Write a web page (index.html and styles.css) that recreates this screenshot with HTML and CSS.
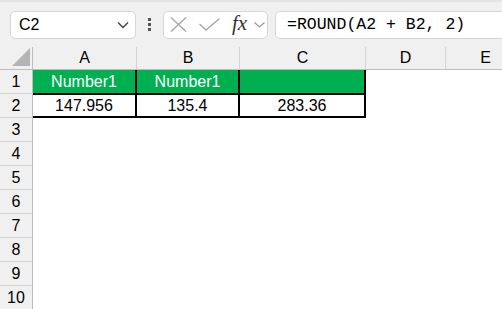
FILE: index.html
```html
<!DOCTYPE html>
<html lang="en">
<head>
	<meta charset="UTF-8">
	<title>ROUND</title>
	<link rel="stylesheet" href="styles.css">
</head>
<body>
	<div class="toolbar">
		<div class="namebox">
			<span>C2</span>
			<svg class="chev" width="12" height="8" viewBox="0 0 12 8"><polyline points="1,1.5 6,6.5 11,1.5" fill="none" stroke="#444" stroke-width="1.4"/></svg>
		</div>
		<div class="dots"><i></i><i></i><i></i></div>
		<div class="fbtns">
			<svg width="17" height="15" viewBox="0 0 17 15"><path d="M1 0.5 L16 14.5 M16 0.5 L1 14.5" stroke="#a8a8a8" stroke-width="1.4" fill="none"/></svg>
			<svg width="21" height="13" viewBox="0 0 21 13"><polyline points="0.5,6 7,12 20.5,0.5" stroke="#a8a8a8" stroke-width="1.4" fill="none"/></svg>
			<span class="fx">fx</span>
			<svg width="11" height="6" viewBox="0 0 11 6"><polyline points="0.5,0.5 5.5,5 10.5,0.5" fill="none" stroke="#999" stroke-width="1.2"/></svg>
		</div>
		<div class="formula">=ROUND(A2 + B2, 2)</div>
	</div>

	<div class="sheet">
		<div class="corner"><svg width="18" height="18" viewBox="0 0 18 18"><polygon points="18,0 18,18 0,18" fill="#b4b4b4"/></svg></div>
		<div class="hd">A</div>
		<div class="hd">B</div>
		<div class="hd">C</div>
		<div class="hd">D</div>
		<div class="hd">E</div>

		<div class="rh">1</div>
		<div class="cell green first">Number1</div>
		<div class="cell green">Number1</div>
		<div class="cell green"></div>
		<div class="cell"></div>
		<div class="cell"></div>

		<div class="rh">2</div>
		<div class="cell boxed first">147.956</div>
		<div class="cell boxed">135.4</div>
		<div class="cell boxed">283.36</div>
		<div class="cell"></div>
		<div class="cell"></div>

		<div class="rh">3</div><div class="cell"></div><div class="cell"></div><div class="cell"></div><div class="cell"></div><div class="cell"></div>
		<div class="rh">4</div><div class="cell"></div><div class="cell"></div><div class="cell"></div><div class="cell"></div><div class="cell"></div>
		<div class="rh">5</div><div class="cell"></div><div class="cell"></div><div class="cell"></div><div class="cell"></div><div class="cell"></div>
		<div class="rh">6</div><div class="cell"></div><div class="cell"></div><div class="cell"></div><div class="cell"></div><div class="cell"></div>
		<div class="rh">7</div><div class="cell"></div><div class="cell"></div><div class="cell"></div><div class="cell"></div><div class="cell"></div>
		<div class="rh">8</div><div class="cell"></div><div class="cell"></div><div class="cell"></div><div class="cell"></div><div class="cell"></div>
		<div class="rh">9</div><div class="cell"></div><div class="cell"></div><div class="cell"></div><div class="cell"></div><div class="cell"></div>
		<div class="rh">10</div><div class="cell"></div><div class="cell"></div><div class="cell"></div><div class="cell"></div><div class="cell"></div>
	</div>
</body>
</html>
```

FILE: styles.css
```css
* {
	box-sizing: border-box;
}

body {
	margin: 0;
	width: 502px;
	height: 309px;
	overflow: hidden;
	background-color: #fff;
	font-family: "Liberation Sans", Arial, sans-serif;
	color: #000;
}

.toolbar {
	display: flex;
	align-items: center;
	height: 47px;
	padding: 0 0 0 10px;
	background-color: #f0f0f0;
	border-top: 2px solid #e4e4e4;
}

.namebox {
	display: flex;
	align-items: center;
	justify-content: space-between;
	width: 126px;
	height: 28px;
	padding: 0 6px 0 8px;
	background-color: #fff;
	border: 1px solid #d6d6d6;
	border-radius: 5px;
	font-size: 16px;
}

.dots {
	display: flex;
	flex-direction: column;
	gap: 2px;
	margin: 0 12px;
}

.dots i {
	display: block;
	width: 3px;
	height: 3px;
	background-color: #555;
}

.fbtns {
	display: flex;
	align-items: center;
	width: 105px;
	height: 28px;
	padding: 0 0 0 6px;
	background-color: #fff;
	border: 1px solid #d6d6d6;
	border-radius: 5px;
}

.fbtns svg:nth-child(2) {
	margin-left: 12px;
}

.fx {
	margin-left: 12px;
	font-family: "Liberation Serif", serif;
	font-style: italic;
	font-size: 21px;
	color: #333;
	line-height: 1;
	margin-top: -3px;
}

.fbtns svg:last-child {
	margin-left: 7px;
}

.formula {
	flex: 1;
	display: flex;
	align-items: center;
	height: 28px;
	margin-left: 7px;
	margin-right: -10px;
	padding-left: 11px;
	background-color: #fff;
	border: 1px solid #d6d6d6;
	border-radius: 5px;
	font-family: "Liberation Mono", monospace;
	font-size: 16.5px;
	color: #000;
}

.sheet {
	display: grid;
	grid-template-columns: 33px 104px 103px 126px 80px 80px;
	grid-template-rows: 23px repeat(10, 24px);
	font-size: 16px;
}

.corner {
	display: flex;
	align-items: flex-end;
	justify-content: flex-end;
	padding: 0 2px 3px 0;
	background-color: #f0f0f0;
	border-right: 1px solid #bdbdbd;
	border-bottom: 1px solid #bdbdbd;
}

.hd {
	display: flex;
	align-items: center;
	justify-content: center;
	background-color: #f0f0f0;
	border-right: 1px solid #d2d2d2;
	border-bottom: 1px solid #bdbdbd;
}

.rh {
	display: flex;
	align-items: center;
	justify-content: center;
	background-color: #f0f0f0;
	border-right: 1px solid #bdbdbd;
	border-bottom: 1px solid #d2d2d2;
}

.cell {
	display: flex;
	align-items: center;
	justify-content: center;
}

.green {
	background-color: #00b050;
	color: #fff;
	border-right: 2px solid #000;
	border-bottom: 1px solid #000;
}

.boxed {
	border-right: 2px solid #000;
	border-bottom: 2px solid #000;
	border-top: 1px solid #000;
}
```
